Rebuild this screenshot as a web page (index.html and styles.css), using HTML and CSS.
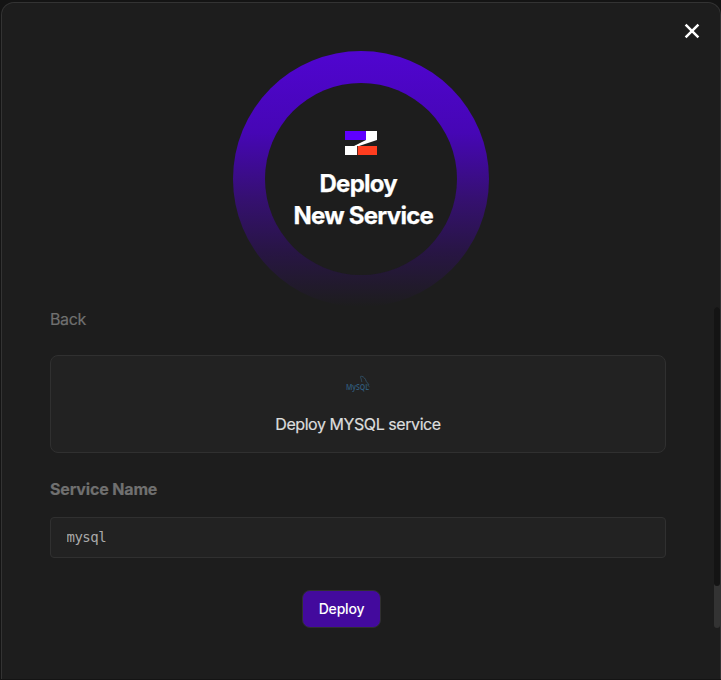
FILE: index.html
```
<!DOCTYPE html>
<html lang="en">
<head>
<meta charset="utf-8">
<title>Deploy New Service</title>
<link rel="stylesheet" href="styles.css">
</head>
<body>
<main class="dialog">
  <button class="close" aria-label="Close">
    <svg width="16" height="16" viewBox="0 0 16 16"><path d="M1.6 1.6 14.4 14.4M14.4 1.6 1.6 14.4" fill="none" stroke="#fff" stroke-width="2.5"/></svg>
  </button>
  <header class="ring">
    <div class="ring-inner">
      <svg class="logo" width="32" height="24" viewBox="0 0 32 24">
        <path d="M21 0h11v9L14 15h-2v9H0v-9h9L21 9z" fill="#fff"/>
        <path d="M0 0h21v9H0z" fill="#5f00ff"/>
        <path d="M12.700 15H32v9H12.700z" fill="#ff3d1f"/>
      </svg>
      <h1 class="title"><span class="title-top">Deploy</span><span class="title-bottom">New Service</span></h1>
    </div>
  </header>
  <section class="content">
    <a class="back">Back</a>
    <div class="card">
      <svg class="mysql" width="26" height="20" viewBox="0 0 26 20">
        <text x="1" y="15" textLength="23" lengthAdjust="spacingAndGlyphs">MySQL</text>
        <path d="M17 7c-.8-1-.4-2-.9-3.300-.8-1.700-1-2.500.3-2.400C19 1.500 20.500 4 21.300 6.500c.6 1.300 2 1.800 2.600 3.200l-1.400.3 2 1.800" fill="none" stroke="#315169" stroke-width=".9"/>
      </svg>
      <span class="card-text">Deploy MYSQL service</span>
    </div>
    <label class="label" for="name">Service Name</label>
    <input class="input" id="name" value="mysql">
    <button class="deploy">Deploy</button>
  </section>
  <div class="scrollbar"><div class="thumb"></div></div>
</main>
</body>
</html>
```
FILE: styles.css
```
* { box-sizing: border-box; }
body { margin: 0; height: 680px; overflow: hidden; background: #141414; padding: 2px 0 0 1px; font-family: Inter, sans-serif; }
.dialog { position: relative; z-index: 0; width: 720px; height: 677px; border: 1px solid #333; border-bottom: 0; border-radius: 13px 13px 0 0; background: #1d1d1d; padding-top: 48px; }
.close { position: absolute; left: 682px; top: 20px; width: 16px; height: 16px; padding: 0; border: 0; background: none; }
.close svg { display: block; }
.ring { width: 256px; height: 256px; margin-left: 231px; padding: 32px; border-radius: 50%; background: linear-gradient(#5005d0 0%, #4606b5 32%, #351070 58%, #281545 78%, #1d1d1d 100%); }
.ring-inner { width: 192px; height: 192px; border-radius: 50%; background: #1d1d1d; display: flex; flex-direction: column; padding-top: 48px; }
.logo { display: block; margin-left: 80px; flex: none; }
.title { margin: 13px 0 0 28.500px; width: 139px; font-size: 24px; line-height: 32px; font-weight: 700; color: #fff; letter-spacing: -.75px; -webkit-text-stroke: .25px #fff; white-space: nowrap; }
.title span { display: block; }
.title-top { margin-left: 26px; }
.content { display: flex; flex-direction: column; width: 616px; margin-left: 48px; }
.back { font-size: 16px; line-height: 24px; color: #707070; letter-spacing: -.4px; -webkit-text-stroke: .2px #707070; }
.card { margin-top: 24px; height: 98px; background: #222; border: 1px solid #303030; border-radius: 8px; display: flex; flex-direction: column; align-items: center; padding-top: 19px; }
.mysql { overflow: visible; }
.mysql text { font: 600 8px "Open Sans", sans-serif; fill: #315c7d; }
.card-text { margin-top: 17px; font-size: 16px; line-height: 24px; color: #ddd; letter-spacing: -.43px; -webkit-text-stroke: .2px #ddd; }
.label { margin-top: 24px; font-size: 16px; line-height: 24px; font-weight: 700; color: #707070; letter-spacing: -.15px; -webkit-text-stroke: .2px #707070; }
.input { margin-top: 16px; width: 616px; height: 41px; border: 1px solid #303030; border-radius: 4px; background: #222; color: #aaa; font: 14px "DejaVu Sans Mono", monospace; letter-spacing: -.5px; padding: 0 15.500px 2px; }
.deploy { margin: 32px 0 0 252px; width: 79px; height: 38px; border: 1px solid #303030; border-radius: 8px; background: #430a9d; color: #fff; font: 500 14px Inter, sans-serif; letter-spacing: -.2px; padding: 0 0 1px; }
.scrollbar { position: absolute; left: 712px; top: 304px; width: 6px; height: 321px; background: #333; border-radius: 3px; }
.thumb { width: 6px; height: 279px; background: #141414; border-radius: 3px; }
```
